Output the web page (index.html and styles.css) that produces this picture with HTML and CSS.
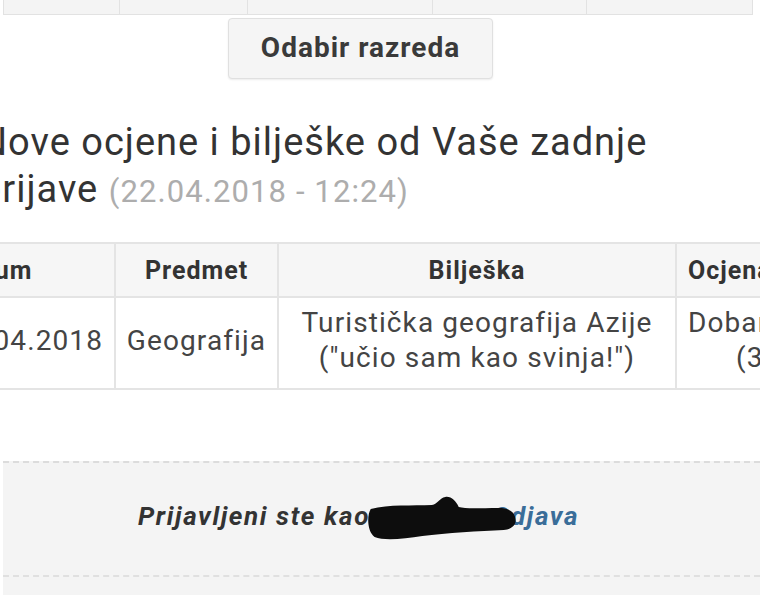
FILE: index.html
```html
<!DOCTYPE html>
<html lang="hr">
<head>
    <meta charset="UTF-8">
    <meta name="viewport" content="width=device-width, initial-scale=1.0">
    <title>e-Dnevnik</title>
    <link rel="stylesheet" href="styles.css">
</head>
<body>
    <div class="page">
        <!-- izbornik (gornji dio je odrezan) -->
        <nav class="tabs">
            <a class="tab"></a>
            <a class="tab"></a>
            <a class="tab"></a>
            <a class="tab"></a>
            <a class="tab"></a>
        </nav>

        <div class="class-pick">
            <button class="btn">Odabir razreda</button>
        </div>

        <section class="news">
            <h2 class="news-title">Nove ocjene i bilješke od Vaše zadnje prijave <small>(22.04.2018 - 12:24)</small></h2>

            <table class="grades">
                <colgroup>
                    <col class="c-date">
                    <col class="c-subject">
                    <col class="c-note">
                    <col class="c-grade">
                </colgroup>
                <thead>
                    <tr>
                        <th>Datum</th>
                        <th>Predmet</th>
                        <th>Bilješka</th>
                        <th class="grade">Ocjena</th>
                    </tr>
                </thead>
                <tbody>
                    <tr>
                        <td class="date">22.04.2018</td>
                        <td>Geografija</td>
                        <td>Turistička geografija Azije<br>("učio sam kao svinja!")</td>
                        <td class="grade">Dobar<br><span class="num">(3)</span></td>
                    </tr>
                </tbody>
            </table>
        </section>

        <footer class="footer">
            <div class="footer-inner">
                <p class="who">
                    Prijavljeni ste kao
                    <span class="user">ime.prezime
                        <!-- precrtano -->
                        <svg class="scribble" viewBox="0 0 160 46" width="153" height="46" preserveAspectRatio="none">
                            <path d="M6 14 C2 20 2 36 10 42 C20 46 40 44 60 41 C85 38 120 36 145 35 C156 34 159 28 157 22 C155 15 148 13 140 13 C120 13 105 14 98 12 C95 6 90 1 84 2 C78 3 76 9 70 10 C50 11 25 9 6 14 Z" fill="#0d0d0d"/>
                        </svg>
                    </span><a class="logout" href="#">Odjava</a>
                </p>
            </div>
        </footer>
    </div>
</body>
</html>
```

FILE: styles.css
```css
html, body {
    margin: 0;
    overflow: hidden;
}
body {
    font-family: Roboto, "Noto Sans", Arial, sans-serif;
    color: #333;
    background-color: #fff;
}
.page {
    padding-left: 3px;
}

/* izbornik */
.tabs {
    display: grid;
    grid-template-columns: 117px 128px 185px 154px 166px;
    margin-top: -29px;
}
.tab {
    display: block;
    height: 44px;
    box-sizing: border-box;
    border: 1px solid #e2e2e2;
    border-left: none;
    background-color: #f4f4f4;
}
.tab:first-child {
    border-left: 1px solid #e2e2e2;
}

.class-pick {
    padding: 3px 0 0 225px;
}
.btn {
    width: 265px;
    height: 61px;
    padding: 0 0 3px;
    border: 1px solid #e0e0e0;
    border-radius: 4px;
    background-color: #f5f5f5;
    box-shadow: 0 1px 2px rgba(0, 0, 0, 0.08);
    font-family: Roboto, Arial, sans-serif;
    font-size: 28px;
    font-weight: bold;
    letter-spacing: 1px;
    color: #3a3a3a;
}

/* nove ocjene */
.news {
    margin-left: -23px;
}
.news-title {
    max-width: 700px;
    margin: 40px 0 0;
    font-size: 38px;
    font-weight: normal;
    line-height: 47px;
    letter-spacing: 1px;
    color: #333;
}
.news-title small {
    font-size: 31px;
    letter-spacing: 1.1px;
    color: #adadad;
}

.grades {
    table-layout: fixed;
    width: 935px;
    margin: 27px 0 0 -110px;
    border-collapse: collapse;
}
.c-date { width: 244px; }
.c-subject { width: 163px; }
.c-note { width: 398px; }
.c-grade { width: 130px; }
.grades th, .grades td {
    border: 2px solid #e4e4e4;
    text-align: center;
    padding: 0 6px;
}
.grades th {
    height: 52px;
    background-color: #f6f6f6;
    font-size: 25px;
    font-weight: bold;
    letter-spacing: 1px;
    color: #333;
}
.grades td {
    height: 84px;
    padding-bottom: 6px;
    font-size: 28px;
    line-height: 35px;
    letter-spacing: 1.1px;
    color: #444;
}
.grades .date {
    text-align: right;
    padding-right: 11px;
}
.grades .grade {
    text-align: left;
    padding-left: 11px;
}
.grades .num {
    padding-left: 48px;
}

/* podnožje */
.footer {
    margin-top: 71px;
    border-top: 2px dashed #dcdcdc;
    background-color: #f4f4f4;
    padding-bottom: 18px;
}
.footer-inner {
    border-bottom: 2px dashed #e0e0e0;
    padding: 38px 0 44px 135px;
}
.who {
    margin: 0;
    font-size: 26px;
    line-height: 30px;
    font-weight: bold;
    font-style: italic;
    letter-spacing: 1.6px;
    color: #333;
}
.user {
    position: relative;
    display: inline-block;
    width: 114px;
    color: transparent;
}
.scribble {
    position: absolute;
    left: -13px;
    top: -6px;
}
.logout {
    color: #3a6d99;
    text-decoration: none;
}
```
